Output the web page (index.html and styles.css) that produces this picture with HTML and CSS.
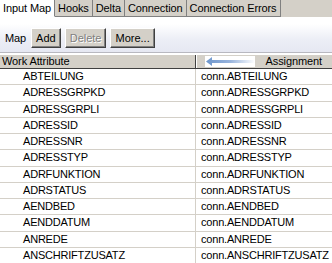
FILE: index.html
```html
<!DOCTYPE html>
<html lang="en">
<head>
    <meta charset="UTF-8">
    <title>Input Map</title>
    <link rel="stylesheet" href="styles.css">
</head>
<body>
    <div class="tabs">
        <div class="tab active">Input Map</div>
        <div class="tab">Hooks</div>
        <div class="tab">Delta</div>
        <div class="tab">Connection</div>
        <div class="tab">Connection Errors</div>
    </div>

    <div class="panel">
        <div class="toolbar">
            <span class="label">Map</span>
            <button class="btn">Add</button>
            <button class="btn" disabled>Delete</button>
            <button class="btn">More...</button>
        </div>

        <div class="grid">
            <div class="head">
                <div class="col-left">Work Attribute</div>
                <div class="col-right">
                    <svg class="arrow" width="50" height="11" viewBox="0 0 50 11">
                        <defs>
                            <linearGradient id="fade" x1="0" x2="1" y1="0" y2="0">
                                <stop offset="0" stop-color="#6d96cc"/>
                                <stop offset="0.5" stop-color="#9ab5dd"/>
                                <stop offset="1" stop-color="#ffffff"/>
                            </linearGradient>
                        </defs>
                        <rect width="50" height="11" fill="#fff"/>
                        <polygon points="1,5.5 7,1 7,4 50,4 50,7 7,7 7,10" fill="url(#fade)"/>
                    </svg>
                    <span>Assignment</span>
                </div>
            </div>
            <div id="rows"></div>
        </div>
    </div>

    <script>
        const names = ['ABTEILUNG', 'ADRESSGRPKD', 'ADRESSGRPLI', 'ADRESSID', 'ADRESSNR',
            'ADRESSTYP', 'ADRFUNKTION', 'ADRSTATUS', 'AENDBED', 'AENDDATUM', 'ANREDE',
            'ANSCHRIFTZUSATZ'];
        const rows = document.getElementById('rows');
        names.forEach(name => {
            const row = document.createElement('div');
            row.className = 'row';
            row.innerHTML = `<div class="col-left">${name}</div><div class="col-right">conn.${name}</div>`;
            rows.appendChild(row);
        });
    </script>
</body>
</html>
```

FILE: styles.css
```css
body {
    margin: 0;
    font-family: "Liberation Sans", Arial, sans-serif;
    font-size: 11px;
    letter-spacing: -0.1px;
    color: #000;
    background-color: #fff;
    overflow: hidden;
}
.tabs {
    display: flex;
    height: 17px;
    background-color: #d4d0c8;
}
.tab {
    padding: 1px 3px 0 3px;
    line-height: 15px;
    border-right: 1px solid #808080;
    border-bottom: 1px solid #808080;
}
.tab.active {
    background-color: #fff;
    border-bottom: 1px solid #fff;
}
.panel {
    background-color: #fff;
    padding-top: 7px;
}
.toolbar {
    display: flex;
    align-items: center;
    height: 28px;
    padding-left: 5px;
    background: linear-gradient(#ffffff, #eceef6 55%, #e6e8f2);
    border-bottom: 1px solid #b8b8c0;
}
.label {
    margin-right: 5px;
}
.btn {
    font: inherit;
    height: 20px;
    padding: 0 4px;
    margin-right: 4px;
    background-color: #d4d0c8;
    border: 1px solid;
    border-color: #fff #404040 #404040 #fff;
    box-shadow: inset -1px -1px 0 #808080;
}
.btn:disabled {
    color: #808080;
    text-shadow: 1px 1px 0 #fff;
}
.grid {
    margin-top: 2px;
}
.head {
    display: flex;
    height: 13px;
    line-height: 13px;
    background-color: #d4d0c8;
    border-bottom: 1px solid #404040;
}
.head .col-left {
    padding-left: 2px;
    border-right: 1px solid #404040;
}
.head .col-right {
    display: flex;
    align-items: center;
    justify-content: space-between;
    padding: 0 10px 0 8px;
    border-left: 1px solid #fff;
}
.col-left {
    width: 196px;
    box-sizing: border-box;
    flex: none;
}
.col-right {
    flex: 1;
}
.row {
    display: flex;
    height: 15.25px;
    line-height: 15px;
    letter-spacing: -0.2px;
    border-bottom: 1px solid #d4d0c8;
}
.row .col-left {
    padding-left: 23px;
    border-right: 1px solid #d4d0c8;
}
.row .col-right {
    padding-left: 5px;
}
```
